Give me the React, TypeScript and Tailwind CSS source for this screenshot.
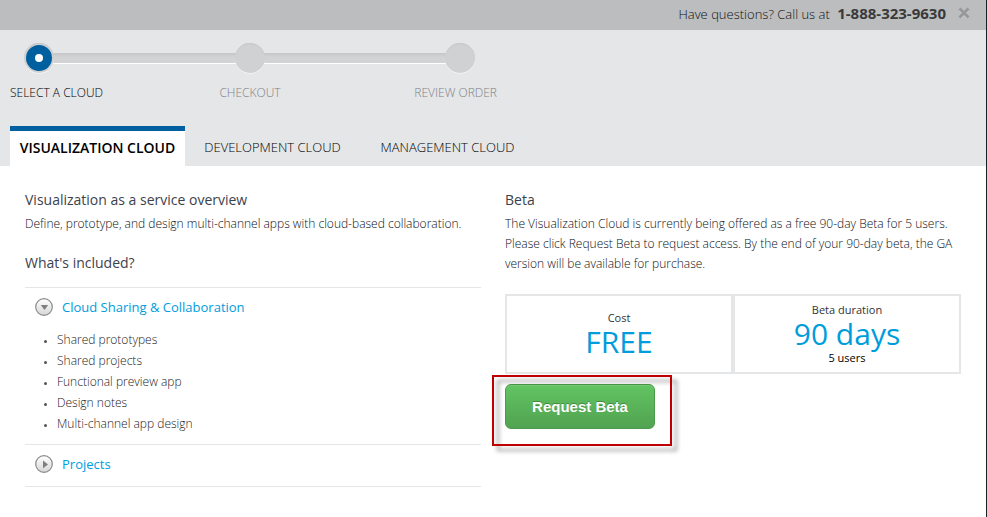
import { useState } from "react";

const features = [
  "Shared prototypes",
  "Shared projects",
  "Functional preview app",
  "Design notes",
  "Multi-channel app design",
];

const tabs = ["VISUALIZATION CLOUD", "DEVELOPMENT CLOUD", "MANAGEMENT CLOUD"];

function ToggleIcon({ open }: { open: boolean }) {
  return (
    <svg width="18" height="18" viewBox="0 0 18 18" aria-hidden="true">
      <defs>
        <linearGradient id="disc" x1="0" y1="0" x2="0" y2="1">
          <stop offset="0" stopColor="#ffffff" />
          <stop offset="1" stopColor="#d6d6d6" />
        </linearGradient>
      </defs>
      <circle cx="9" cy="9" r="8.3" fill="url(#disc)" stroke="#8b8b8b" strokeWidth="1.2" />
      <path d={open ? "M5.8 7h7.4L9.5 12z" : "M8 5.6v7.6L13 9.4z"} fill="#7e7e7e" />
    </svg>
  );
}

function AccordionHeader({ label, open, onToggle }: { label: string; open: boolean; onToggle: () => void }) {
  return (
    <h3>
      <button
        type="button"
        aria-expanded={open}
        onClick={onToggle}
        className="flex items-center gap-[9px] pl-2.5 text-[13px] leading-5 text-[#009ddc]"
      >
        <ToggleIcon open={open} />
        {label}
      </button>
    </h3>
  );
}

function StepDot({ active = false }: { active?: boolean }) {
  return (
    <span className="z-10 flex size-[30px] shrink-0 items-center justify-center rounded-full bg-[#d0d1d3] shadow-[inset_0_1px_1px_#c6c7c9,0_1px_0_#f3f4f5]">
      {active && (
        <span className="flex size-[26px] items-center justify-center rounded-full bg-[#005f9e]">
          <span className="size-2 rounded-full bg-white" />
        </span>
      )}
    </span>
  );
}

function StepTrack() {
  return <span className="-mx-px h-[11px] flex-1 border-b border-white bg-linear-to-b from-[#c5c6c8] to-[#d2d3d5] to-40%" />;
}

export default function App() {
  const [tab, setTab] = useState(0);
  const [sharing, setSharing] = useState(true);
  const [projects, setProjects] = useState(false);

  return (
    <div className="min-h-screen border-r border-[#1b2026] bg-white font-['Open_Sans',sans-serif] text-[#3b424c]">
      <header className="flex h-[30px] items-center justify-end gap-3 bg-[#bcbdbf] pr-4 pb-1 text-[13px] text-[#111]">
        <p className="font-light">
          Have questions? Call us at <strong className="ml-1 text-[15px] font-bold text-[#3a3a3a]">1-888-323-9630</strong>
        </p>
        <button type="button" aria-label="Close">
          <svg width="12" height="12" viewBox="0 0 12 12" aria-hidden="true">
            <path d="M2 2.8l8 8M10 2.8l-8 8" stroke="#d2d3d5" strokeWidth="3" />
            <path d="M1.5 1.5l9 9M10.5 1.5l-9 9" stroke="#97989a" strokeWidth="3" />
          </svg>
        </button>
      </header>

      <div className="bg-[#e5e6e8] px-2.5 pt-[13px]">
        <div className="flex w-[465px] items-center pl-3.5">
          <StepDot active />
          <StepTrack />
          <StepDot />
          <StepTrack />
          <StepDot />
        </div>
        <ol className="grid w-[487px] grid-cols-[160px_160px_167px] pt-2.5 text-xs leading-5 font-light text-[#808286]">
          <li aria-current="step" className="text-[#000]">SELECT A CLOUD</li>
          <li className="text-center">CHECKOUT</li>
          <li className="text-right">REVIEW ORDER</li>
        </ol>
        <nav className="mt-[23px] flex" role="tablist">
          {tabs.map((name, i) => (
            <button
              key={name}
              type="button"
              role="tab"
              aria-selected={tab === i}
              onClick={() => setTab(i)}
              className={
                tab === i
                  ? "h-10 w-[175px] border-t-5 border-[#005f9e] bg-white pb-0.5 text-sm font-semibold whitespace-nowrap text-black"
                  : "h-10 w-[175px] border-t-5 border-transparent pb-0.5 text-[13px] font-light whitespace-nowrap text-black"
              }
            >
              {name}
            </button>
          ))}
        </nav>
      </div>

      <main className="grid grid-cols-2 gap-6 px-[25px] pt-6">
        <section>
          <h2 className="text-sm leading-5">Visualization as a service overview</h2>
          <p className="pt-1 text-xs leading-5 font-light text-[#0b1017]">
            Define, prototype, and design multi-channel apps with cloud-based collaboration.
          </p>
          <h2 className="pt-[19px] text-sm leading-5">What's included?</h2>
          <div className="mt-3.5 border-y border-[#e5e6e8]">
            <div className="pt-[9px] pb-2.5">
              <AccordionHeader label="Cloud Sharing & Collaboration" open={sharing} onToggle={() => setSharing(!sharing)} />
              {sharing && (
                <ul className="list-disc pt-3 pl-8 text-xs leading-[21px] font-light text-[#1a1a1a] marker:text-[9px] marker:text-[#555]">
                  {features.map((f) => (
                    <li key={f}>{f}</li>
                  ))}
                </ul>
              )}
            </div>
            <div className="border-t border-[#e5e6e8] pt-[9px] pb-3">
              <AccordionHeader label="Projects" open={projects} onToggle={() => setProjects(!projects)} />
            </div>
          </div>
        </section>

        <section>
          <h2 className="text-sm leading-5">Beta</h2>
          <p className="pt-1 text-xs leading-5 font-light text-[#0b1017]">
            The Visualization Cloud is currently being offered as a free 90-day Beta for 5 users. Please click Request
            Beta to request access. By the end of your 90-day beta, the GA version will be available for purchase.
          </p>
          <div className="mt-5 grid h-20 grid-cols-2 text-center text-[11px] leading-4 text-[#333]">
            <div className="flex flex-col justify-center border-2 border-[#e5e6e8]">
              <p>Cost</p>
              <p className="text-3xl leading-8 text-[#009ddc]">FREE</p>
            </div>
            <div className="flex flex-col justify-center border-2 border-[#e5e6e8]">
              <p>Beta duration</p>
              <p className="text-3xl leading-8 text-[#009ddc]">90 days</p>
              <p className="text-black">5 users</p>
            </div>
          </div>
          <div className="relative mt-2.5 w-[150px]">
            <button
              type="button"
              className="h-[45px] w-full rounded-md border border-[#4a9a4b] bg-linear-to-b from-[#62c462] to-[#51a351] pt-0.5 font-['Liberation_Sans',sans-serif] text-[15px] font-bold text-white shadow-[inset_0_1px_0_#7acb7a] text-shadow-[0_-1px_0_#3f8a40]"
            >
              Request Beta
            </button>
            <span className="pointer-events-none absolute -top-[9px] -left-[13px] h-[71px] w-[180px] border-2 border-[#c00000] drop-shadow-[5px_5px_2px_rgba(0,0,0,0.4)]" />
          </div>
        </section>
      </main>
    </div>
  );
}
